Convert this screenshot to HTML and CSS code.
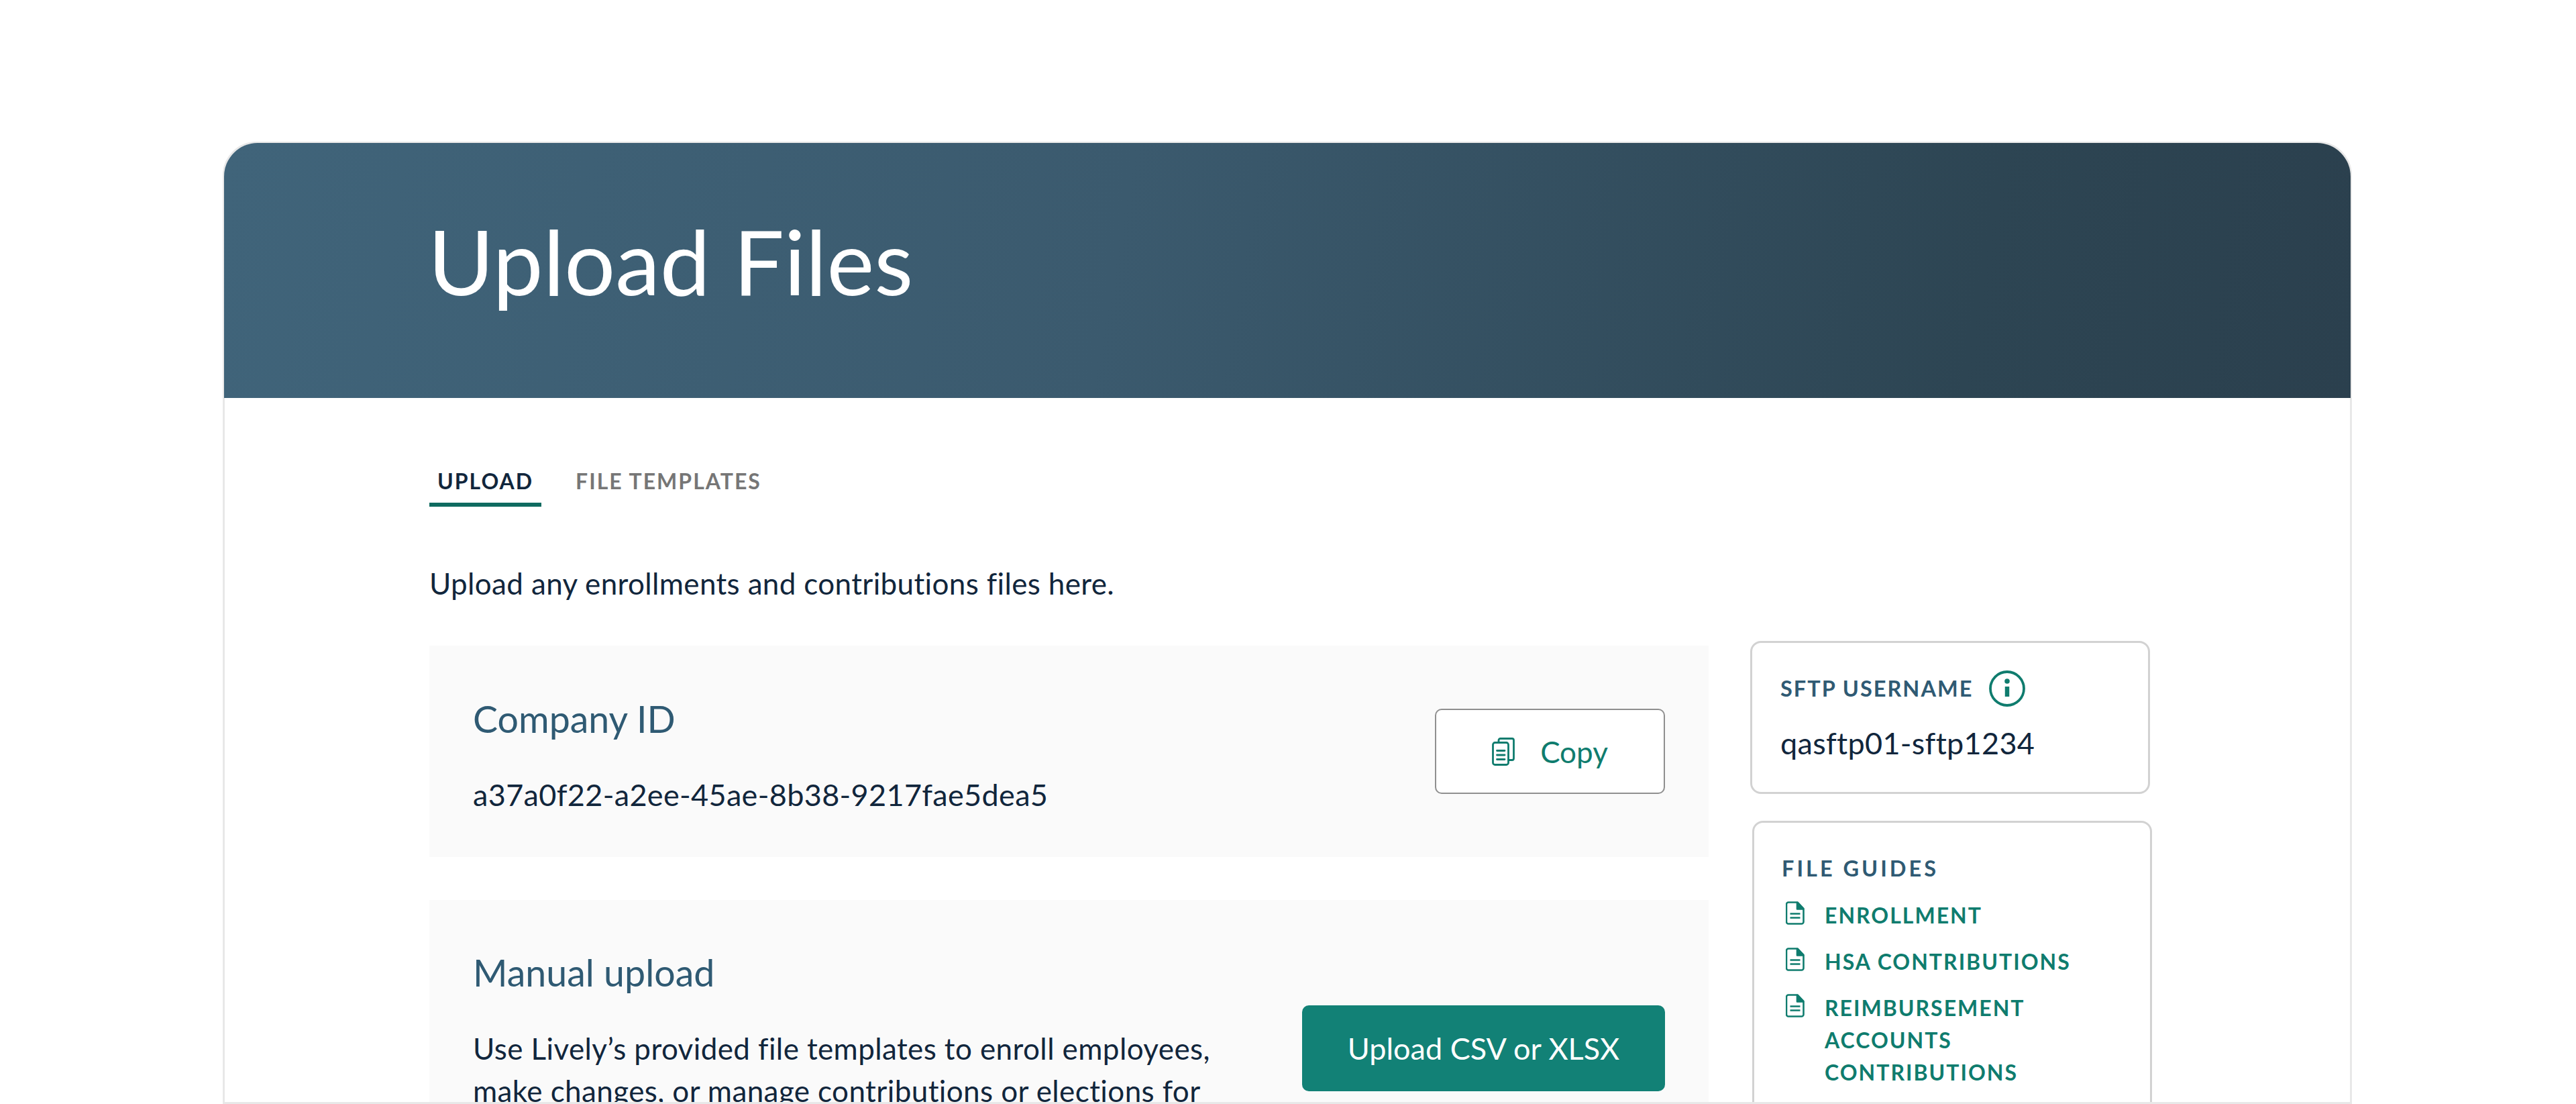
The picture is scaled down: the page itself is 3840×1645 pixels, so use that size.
FILE: index.html
```html
<!DOCTYPE html>
<html lang="en">
<head>
  <meta charset="UTF-8">
  <title>Upload Files</title>
  <link rel="stylesheet" href="styles.css">
</head>
<body>
  <div class="page-card">
    <header class="banner">
      <h1>Upload Files</h1>
    </header>
    <div class="content">
      <nav class="tabs">
        <a class="tab active">UPLOAD</a>
        <a class="tab">FILE TEMPLATES</a>
      </nav>
      <p class="intro">Upload any enrollments and contributions files here.</p>
      <div class="columns">
        <main class="main-col">
          <section class="panel company-panel">
            <div class="company-text">
              <h2>Company ID</h2>
              <p class="company-id">a37a0f22-a2ee-45ae-8b38-9217fae5dea5</p>
            </div>
            <button type="button" class="btn-copy">
              <svg class="copy-icon" viewBox="0 0 34 42" fill="none" stroke="currentColor" stroke-width="2.8" stroke-linejoin="round" stroke-linecap="round">
                <path d="M10 7V4a2.500 2.500 0 0 1 2.500-2.500h17.500a2.500 2.500 0 0 1 2.500 2.500v27a2.500 2.500 0 0 1-2.500 2.500h-5.500"/>
                <rect x="1.500" y="7.500" width="23" height="33" rx="3"/>
                <path d="M7.500 19.500h11.500M7.500 26h11.500M7.500 32.500h11.500"/>
              </svg>
              Copy
            </button>
          </section>
          <section class="panel manual-panel">
            <div class="manual-text">
              <h2>Manual upload</h2>
              <p>Use Lively’s provided file templates to enroll employees, make changes, or manage contributions or elections for</p>
            </div>
            <button type="button" class="btn-upload">Upload CSV or XLSX</button>
          </section>
        </main>
        <aside class="side-col">
          <div class="side-card sftp-card">
            <div class="side-label">
              SFTP USERNAME
              <svg class="info-icon" viewBox="0 0 54 54" fill="none" stroke="currentColor">
                <circle cx="27" cy="27" r="25" stroke-width="3.800"/>
                <path d="M27 24v15" stroke-width="6.500"/>
                <circle cx="27" cy="16" r="3.800" fill="currentColor" stroke="none"/>
              </svg>
            </div>
            <div class="sftp-value">qasftp01-sftp1234</div>
          </div>
          <div class="side-card guides-card">
            <div class="side-label">FILE GUIDES</div>
            <ul class="guide-list">
              <li>
                <svg class="doc-icon" viewBox="0 0 28 35" fill="none" stroke="currentColor" stroke-width="2.600" stroke-linejoin="round">
                  <path d="M4 1.500h13.500l9 9.500v19.500a3 3 0 0 1-3 3H4a3 3 0 0 1-3-3V4.500a3 3 0 0 1 3-3z"/>
                  <path d="M17 2v9.500h9z" fill="currentColor"/>
                  <path d="M6.500 18.500h15M6.500 24.500h15"/>
                </svg>
                <span>ENROLLMENT</span>
              </li>
              <li>
                <svg class="doc-icon" viewBox="0 0 28 35" fill="none" stroke="currentColor" stroke-width="2.600" stroke-linejoin="round">
                  <path d="M4 1.500h13.500l9 9.500v19.500a3 3 0 0 1-3 3H4a3 3 0 0 1-3-3V4.500a3 3 0 0 1 3-3z"/>
                  <path d="M17 2v9.500h9z" fill="currentColor"/>
                  <path d="M6.500 18.500h15M6.500 24.500h15"/>
                </svg>
                <span>HSA CONTRIBUTIONS</span>
              </li>
              <li>
                <svg class="doc-icon" viewBox="0 0 28 35" fill="none" stroke="currentColor" stroke-width="2.600" stroke-linejoin="round">
                  <path d="M4 1.500h13.500l9 9.500v19.500a3 3 0 0 1-3 3H4a3 3 0 0 1-3-3V4.500a3 3 0 0 1 3-3z"/>
                  <path d="M17 2v9.500h9z" fill="currentColor"/>
                  <path d="M6.500 18.500h15M6.500 24.500h15"/>
                </svg>
                <span>REIMBURSEMENT ACCOUNTS CONTRIBUTIONS</span>
              </li>
            </ul>
          </div>
        </aside>
      </div>
    </div>
  </div>
</body>
</html>
```

FILE: styles.css
```css
html, body {
  height: 100%;
  overflow: hidden;
}
body {
  margin: 0;
  background: #fff;
  font-family: Lato, "Open Sans", sans-serif;
  color: #11263c;
}
.page-card {
  margin: 211px 0 0 332px;
  width: 3174px;
  height: 1434px;
  border: 3px solid #e8e8e8;
  border-radius: 50px 50px 0 0;
  box-sizing: border-box;
  display: flex;
  flex-direction: column;
}
.banner {
  flex: none;
  height: 380px;
  margin: -1px -1px 0;
  border-radius: 50px 50px 0 0;
  background: linear-gradient(100deg, #40647a 0%, #3b5a6e 42%, #2d4553 82%, #2b404e 100%);
  padding-left: 304px;
  display: flex;
  align-items: center;
}
.banner h1 {
  margin: 0 0 30px;
  font-size: 134px;
  font-weight: 400;
  color: #fff;
}
.content {
  flex: 1;
  min-height: 0;
  overflow: hidden;
  padding: 104px 0 0 305px;
}
.tabs {
  display: flex;
  gap: 51px;
}
.tab {
  font-size: 32px;
  font-weight: 700;
  letter-spacing: 2px;
  color: #767676;
  line-height: 40px;
  padding: 0 0 12px;
  border-bottom: 6px solid transparent;
}
.tab.active {
  color: #11263c;
  border-bottom-color: #0f6b60;
  padding: 0 12px 12px;
}
.intro {
  margin: 84px 0 0;
  font-size: 44px;
  letter-spacing: 0.350px;
  line-height: 60px;
}
.columns {
  display: flex;
  gap: 62px;
  margin-top: 63px;
  align-items: flex-start;
}
.main-col {
  width: 1907px;
  flex: none;
  display: flex;
  flex-direction: column;
  gap: 64px;
}
.panel {
  background: #fafafa;
  display: flex;
  justify-content: space-between;
  padding: 0 65px;
  box-sizing: border-box;
}
.panel h2 {
  margin: 0;
  font-size: 55.500px;
  font-weight: 400;
  color: #2f5a73;
  line-height: 70px;
}
.company-panel {
  height: 315px;
  align-items: center;
}
.company-text {
  padding-top: 10px;
}
.company-id {
  margin: 48px 0 0;
  font-size: 45px;
  letter-spacing: 0.330px;
  line-height: 60px;
}
.btn-copy {
  width: 343px;
  height: 127px;
  background: #fff;
  border: 2px solid #8f8f8f;
  border-radius: 10px;
  color: #0f7c6e;
  font-family: inherit;
  font-size: 44px;
  display: flex;
  align-items: center;
  justify-content: center;
  gap: 38px;
}
.copy-icon {
  width: 34px;
  height: 42px;
}
.manual-panel {
  height: 400px;
  padding-top: 73px;
}
.manual-text {
  width: 1110px;
}
.manual-text p {
  margin: 47px 0 0;
  font-size: 44px;
  letter-spacing: 0.400px;
  line-height: 63px;
}
.btn-upload {
  width: 541px;
  height: 128px;
  margin-top: 84px;
  background: #128176;
  border: 0;
  border-radius: 10px;
  color: #fff;
  font-family: inherit;
  font-size: 45px;
}
.side-col {
  margin-top: -7px;
  display: flex;
  flex-direction: column;
  gap: 40px;
}
.side-card {
  width: 596px;
  border: 3px solid #d2d2d2;
  border-radius: 16px;
  box-sizing: border-box;
  padding: 0 42px;
  background: #fff;
}
.sftp-card {
  height: 228px;
  padding-top: 41px;
}
.guides-card {
  margin-left: 3px;
  padding: 48px 42px 0 41px;
  height: 500px;
}
.side-label {
  display: flex;
  align-items: center;
  gap: 24px;
  font-size: 32.500px;
  font-weight: 700;
  letter-spacing: 2px;
  color: #2f5a73;
  line-height: 54px;
  height: 54px;
}
.guides-card .side-label {
  height: 40px;
  line-height: 40px;
  letter-spacing: 4px;
}
.info-icon {
  width: 54px;
  height: 54px;
  color: #0f7c6e;
}
.sftp-value {
  margin-top: 26px;
  font-size: 45px;
  letter-spacing: 0.300px;
  line-height: 56px;
}
.guide-list {
  list-style: none;
  margin: 26px 0 0;
  padding: 0 0 0 6px;
}
.guide-list li {
  display: flex;
  gap: 30px;
  font-size: 32px;
  font-weight: 700;
  letter-spacing: 2px;
  line-height: 48px;
  color: #0f7c6e;
  margin-bottom: 21px;
}
.doc-icon {
  width: 28px;
  height: 35px;
  flex: none;
  margin-top: 3px;
}
```
